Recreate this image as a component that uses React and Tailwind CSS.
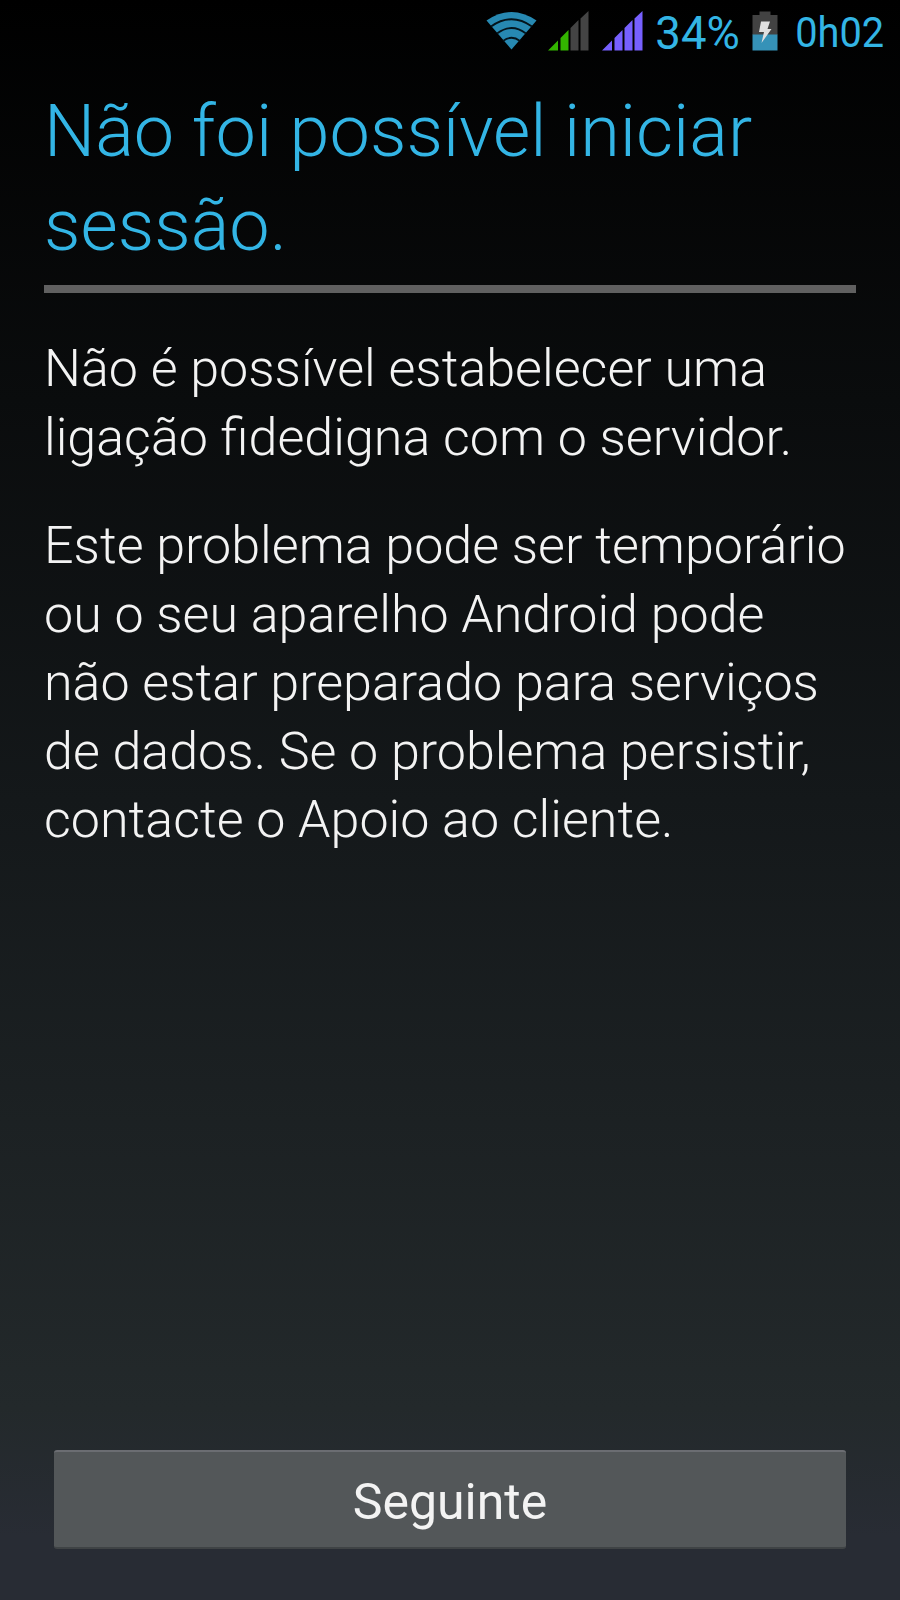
import React from 'react';

const WifiIcon = () => (
  <svg className="mr-[11px]" width="51" height="40" viewBox="0 0 51 40">
    <path d="M25.5 38.5 L0.5 9.5 Q25.5 -7.5 50.5 9.5 Z" fill="#2789b2" />
    <g fill="none" stroke="#04141b" strokeWidth="1.8">
      <path d="M5 15.5 Q25.5 1 46 15.5" />
      <path d="M11 22.5 Q25.5 11.5 40 22.5" />
      <path d="M17 30 Q25.5 23.5 34 30" />
    </g>
  </svg>
);

const SignalIcon = ({ color, level }) => (
  <svg width="41" height="40" viewBox="0 0 41 40">
    <path d="M0 39.5 L10 29.5 V39.5 Z" fill={level > 0 ? color : '#444444'} />
    <path d="M12.5 39.5 V27 L20.5 19 V39.5 Z" fill={level > 1 ? color : '#444444'} />
    <path d="M22.5 39.5 V17 L30.5 9 V39.5 Z" fill={level > 2 ? color : '#444444'} />
    <path d="M32.5 39.5 V7.5 L40.5 0 V39.5 Z" fill={level > 3 ? color : '#444444'} />
  </svg>
);

const BatteryIcon = () => (
  <svg className="mr-[18px]" width="26" height="40" viewBox="0 0 26 40">
    <path d="M7.5 0.5 H18.5 V4 H25.5 V24 H0.5 V4 H7.5 Z" fill="#424242" />
    <rect x="0.5" y="23.5" width="25" height="16" fill="#3592b8" />
    <path d="M9 10.5 H18 L15.5 18 H19.5 L9.5 32 L12 21 H7 Z" fill="#e0e0e0" />
  </svg>
);

const StatusBar = () => (
  <div className="flex h-16 items-center justify-end pr-[16px] pb-[3px] text-[#33b5e5]">
    <WifiIcon />
    <div className="mr-[12px] flex gap-[13px]">
      <SignalIcon color="#33b500" level={2} />
      <SignalIcon color="#7760ff" level={4} />
    </div>
    <span className="mr-[12px] pt-[6px] text-[45.5px] leading-[54px]">34%</span>
    <BatteryIcon />
    <span className="-ml-[8px] origin-right scale-x-[0.925] pt-[3px] text-[43px] leading-[52px]">0h02</span>
  </div>
);

export default function App() {
  return (
    <div className="flex h-[1600px] w-[900px] flex-col bg-[linear-gradient(to_bottom,#000000,#14181a_50%,#23292b_88%,#282c34_96%,#282c34)] font-['Roboto',sans-serif] text-[#f3f3f3]">
      <StatusBar />
      <main className="flex flex-1 flex-col px-[44px] pt-[21px]">
        <h1 className="border-b-8 border-[#606060] pb-[12px] text-[72px] leading-[94px] font-light text-[#33b5e5]">
          Não foi possível iniciar<br />sessão.
        </h1>
        <div className="pt-[42px] text-[52px] leading-[68.5px] font-light">
          <p>Não é possível estabelecer uma<br />ligação fidedigna com o servidor.</p>
          <p className="mt-[40px]">
            Este problema pode ser temporário<br />ou o seu aparelho Android pode<br />não estar preparado para serviços<br />de dados. Se o problema persistir,<br />contacte o Apoio ao cliente.
          </p>
        </div>
        <button className="mx-[10px] mt-auto mb-[51px] h-[99px] rounded-[3px] border-t-2 border-b-2 border-t-[#6b6d72] border-b-[#3f4345] bg-[#535759] pt-[4px] text-[50px] leading-none">
          Seguinte
        </button>
      </main>
    </div>
  );
}
